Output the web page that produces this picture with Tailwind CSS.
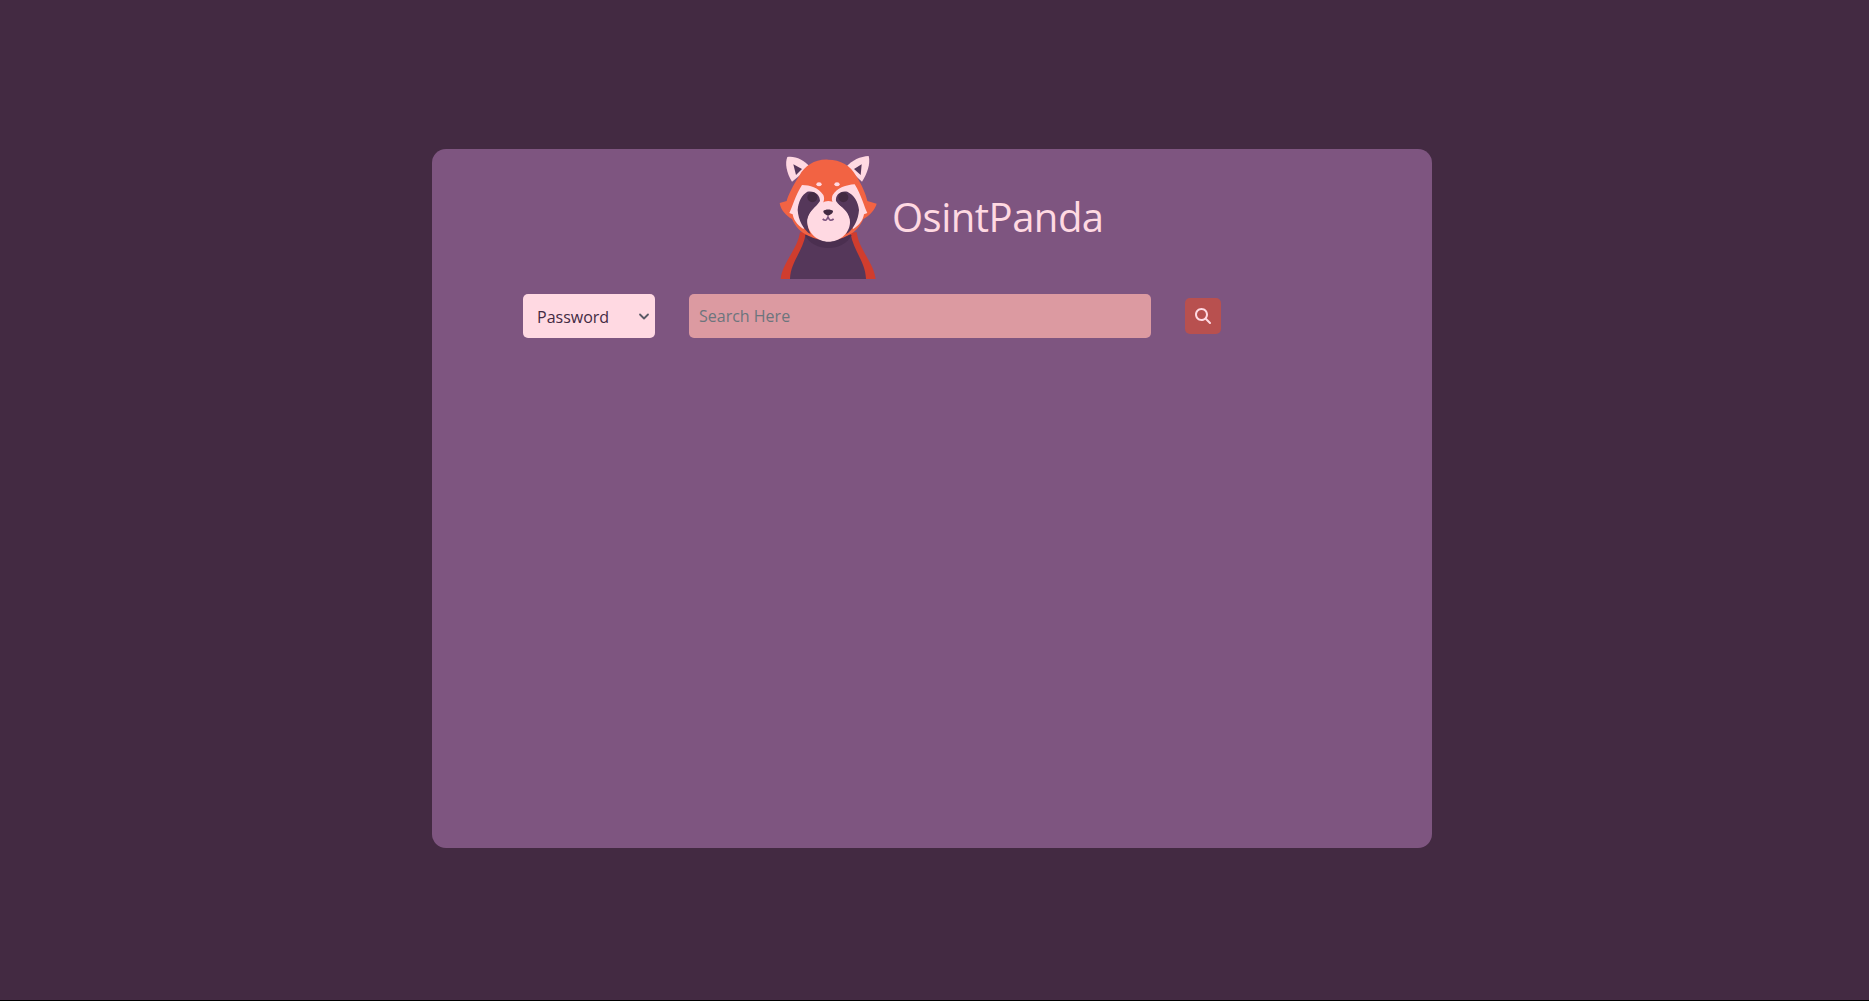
<!DOCTYPE html>
<html lang="en">
<head>
    <meta charset="UTF-8">
    <meta name="viewport" content="width=device-width, initial-scale=1.0">
    <title>OsintPanda</title>
    <script src="https://cdn.jsdelivr.net/npm/@tailwindcss/browser@4"></script>
</head>
<body class="bg-black font-['Open_Sans',sans-serif]">
    <div class="h-[1000px] bg-[#432a42] pt-[149px]">
        <div class="w-[1000px] h-[699px] ml-[432px] bg-[#7e5580] rounded-[14px] pt-[6px]">
            <!-- logo + name -->
            <div class="flex items-center pl-[346px] gap-[15px]">
                <svg class="w-[99px] h-[124px] block" viewBox="55 30 295 372">
                    <!-- ears -->
                    <path d="M96 110C80 85 74 55 82 36C105 32 132 45 150 66Z" fill="#ffd9e2"/>
                    <path d="M100 58L126 72L108 90Z" fill="#55375a"/>
                    <path d="M306 110C322 85 332 55 326 33C302 34 275 46 258 66Z" fill="#ffd9e2"/>
                    <path d="M305 58L282 72L302 90Z" fill="#55375a"/>
                    <!-- body -->
                    <path d="M120 262C112 315 68 350 62 402L347 402C340 350 297 315 290 262Z" fill="#d03d2e"/>
                    <path d="M137 268C128 320 92 350 90 402L318 402C316 350 282 320 272 268Z" fill="#55375a"/>
                    <path d="M135 270C160 322 250 322 275 270Z" fill="#4b2f50"/>
                    <!-- head -->
                    <path d="M204 44C165 42 135 62 118 92C100 120 84 150 80 168L59 174C62 195 78 212 96 222C106 245 122 262 145 272C180 290 230 290 262 272C285 262 300 245 310 222C328 212 345 195 350 176L322 168C318 148 305 118 288 92C272 62 242 44 204 44Z" fill="#f26343"/>
                    <!-- cheek bands -->
                    <path d="M126 120C150 120 175 128 190 150C196 165 190 178 175 190L130 252C110 240 100 222 98 208L88 204C96 190 106 150 126 120Z" fill="#ffd9e2"/>
                    <path d="M284 118C258 120 232 128 218 150C212 165 218 178 232 190L280 252C300 240 310 222 312 208L322 204C314 190 304 150 284 118Z" fill="#ffd9e2"/>
                    <!-- mask -->
                    <path d="M142 140C165 136 180 150 180 168C170 185 145 200 142 225C142 240 146 255 152 268C130 255 115 225 113 195C115 170 125 150 142 140Z" fill="#55375a"/>
                    <path d="M262 140C240 136 226 150 228 168C238 185 266 200 268 225C268 240 264 255 258 268C280 255 295 225 297 195C295 170 282 150 262 140Z" fill="#55375a"/>
                    <!-- face -->
                    <path d="M205 168C180 170 145 195 142 230C142 265 175 290 205 290C238 290 270 265 270 230C268 195 230 170 205 168Z" fill="#ffd9e2"/>
                    <!-- eyes -->
                    <circle cx="157" cy="157" r="15" fill="#432a42"/>
                    <circle cx="250" cy="157" r="15" fill="#432a42"/>
                    <ellipse cx="177" cy="118" rx="8" ry="6" fill="#ffd9e2"/>
                    <ellipse cx="231" cy="118" rx="8" ry="6" fill="#ffd9e2"/>
                    <!-- nose + mouth -->
                    <path d="M190 198C195 192 214 192 219 198C219 206 210 210 204 212C198 210 190 206 190 198Z" fill="#432a42"/>
                    <path d="M188 222C196 229 202 226 204 214C206 226 212 229 221 222" fill="none" stroke="#7e5580" stroke-width="5"/>
                </svg>
                <h1 class="text-[40px] leading-[48px] font-medium text-[#ffd9e2] tracking-[-0.5px]">OsintPanda</h1>
            </div>
            <!-- search row -->
            <div class="flex items-center pl-[91px] pt-[15px] gap-[34px]">
                <div class="relative w-[132px] h-[44px]">
                    <select class="appearance-none w-full h-full bg-[#ffd9e2] text-[#432a42] text-base rounded-[5px] pl-[14px] outline-none pt-[1px]">
                        <option>Password</option>
                    </select>
                    <svg class="absolute right-[5px] top-[19px] w-[12px] h-[8px] pointer-events-none" viewBox="0 0 12 8" fill="none" stroke="#5a5a66" stroke-width="1.8" stroke-linecap="round" stroke-linejoin="round"><path d="M2 1.5l4 4 4-4"/></svg>
                </div>
                <input type="text" placeholder="Search Here" class="w-[462px] h-[44px] bg-[#dc9aa1] rounded-[5px] px-[10px] text-base text-[#432a42] placeholder:text-[#6c757d] outline-none">
                <button class="w-[36px] h-[36px] bg-[#b8504f] rounded-[5px] flex items-center justify-center">
                    <svg class="w-[16px] h-[16px]" viewBox="0 0 512 512" fill="#ffd9e2"><path d="M416 208c0 45.9-14.9 88.300-40 122.700L502.600 457.400c12.500 12.500 12.500 32.800 0 45.300s-32.800 12.500-45.300 0L330.700 376c-34.400 25.200-76.800 40-122.700 40C93.100 416 0 322.900 0 208S93.100 0 208 0S416 93.100 416 208zM208 352a144 144 0 1 0 0-288 144 144 0 1 0 0 288z"/></svg>
                </button>
            </div>
        </div>
    </div>
</body>
</html>
